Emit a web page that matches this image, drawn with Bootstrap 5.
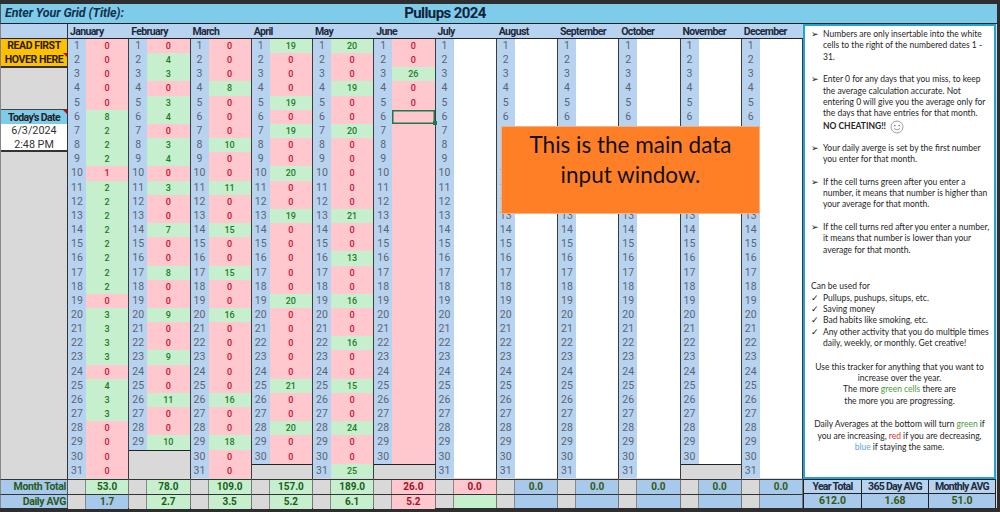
<!DOCTYPE html>
<html lang="en">
<head>
<meta charset="utf-8">
<title>Pullups 2024</title>
<link href="https://cdn.jsdelivr.net/npm/bootstrap@5.3.0/dist/css/bootstrap.min.css" rel="stylesheet">
<style>
html,body{margin:0;height:512px;overflow:hidden;background:#2e2e2e}
.sheet{width:997px;height:512px;margin-left:0;padding-top:4px;position:relative;font-family:Roboto,sans-serif;color:#222}
.titlebar{height:20px;background:#7fcbea;border-bottom:1px solid #222;border-left:1px solid #555}
.title-left{width:300px;padding-left:4px;font-size:12.5px;font-weight:700;font-style:italic;color:#14324a;white-space:nowrap;letter-spacing:-.15px}
.title-main{position:absolute;left:345px;width:200px;text-align:center;font-size:15px;font-weight:700;color:#10233a;line-height:19px;letter-spacing:-.6px}
.ledger{display:grid;grid-template-columns:68px repeat(12,61.25px) 194px;grid-template-rows:15px 440px 15px 14px;background:#d9d9d9}
.side-head{background:#b8d3f0;border-bottom:1px solid #222;border-right:1px solid #333;border-left:1px solid #888}
.mon-head{background:#b8d3f0;border-bottom:1px solid #222;font-size:10.5px;font-weight:700;color:#1d2a3a;padding-left:2px;line-height:15px;white-space:nowrap;letter-spacing:-.65px}
.side-body{background:#d9d9d9;border-right:1px solid #333;border-left:1px solid #888}
.read-box{height:29px;background:#ffc000;border-bottom:2px solid #333;font-size:10.5px;font-weight:700;line-height:14px;text-align:center;color:#2a2000;position:relative;white-space:nowrap;letter-spacing:-.42px}
.side-gap{height:41px}
.date-head{height:15px;background:#7fcbea;font-size:10.5px;font-weight:700;text-align:center;line-height:15px;position:relative;border-top:1px solid #444;white-space:nowrap;letter-spacing:-.6px}
.date-val{height:28px;background:#fff;border-bottom:2px solid #333;font-size:10.8px;text-align:center;line-height:14px;color:#333}
.flag{position:absolute;right:0;top:0;width:0;height:0;border-top:4px solid #e00000;border-left:4px solid transparent}
.read-box .flag{top:14px}
.mon-body{display:grid;grid-template-columns:18px 1fr;grid-template-rows:repeat(31,14.16px);border-right:1px solid #3c3c3c;min-width:0}
.dnum{background:#b8d3f0;color:#5c6470;font-size:10.5px;text-align:center;line-height:14.5px;overflow:hidden}
.dval{font-size:9px;text-align:center;line-height:14.5px;font-weight:500;position:relative}
.is-up{background:#c6efce;color:#1f7a1f}
.is-down{background:#ffc7ce;color:#c8102e}
.is-open{background:#fff}
.filler{grid-column:1/-1;background:#d9d9d9;border-top:1px solid #222}
.picked{box-shadow:inset 0 0 0 1.5px #1f7a4a}
.handle{position:absolute;right:-2px;bottom:-1px;width:4px;height:4px;background:#1f7a4a;z-index:2}
.foot-label{background:#a6c9ec;border-top:1px solid #333;border-right:1px solid #555;border-left:1px solid #888;font-size:10.5px;font-weight:700;color:#2a5a1a;text-align:right;padding-right:1px;line-height:14px;white-space:nowrap;letter-spacing:-.35px}
.foot-cell{display:grid;grid-template-columns:18px 1fr;border-top:1px solid #333;border-right:1px solid #777}
.foot-gap{background:#d9d9d9;border-right:1px solid #888}
.foot-val{font-size:10px;font-weight:700;text-align:center;line-height:14px}
.f-up{background:#c6efce;color:#1a5e1a}
.f-down{background:#ffc7ce;color:#a50e1e}
.f-flat{background:#a6c9ec;color:#35590f}
.note-panel{grid-row:1/3;grid-column:14;background:#fff;border:2px solid #1fa3d8;padding:3px 0 0 6px;font-family:Lato,"Open Sans",sans-serif;font-size:8.5px;line-height:11.4px;color:#262626;white-space:nowrap;overflow:hidden;width:193px}
.note-row{display:flex;margin-bottom:11px}
.note-mark{width:12px;flex:none;color:#111;font-family:"DejaVu Sans",sans-serif;font-size:9px}
.note-row.tight{margin-bottom:0}
.note-mid{text-align:center;margin:0 0 12px -4px;width:185px}
.tone-g{color:#4a9a3c}.tone-r{color:#e0302a}.tone-b{color:#5ba3e6}
.smile{vertical-align:-5px;margin-left:4px}
.stat-trio{grid-column:14;grid-row:3/5;display:grid;grid-template-columns:59px 67px 67px;grid-template-rows:15px 14px;width:193px}
.stat-h{background:#b8d3f0;border:1px solid #222;border-left-width:0;font-size:10.5px;font-weight:700;text-align:center;line-height:14px;color:#1d2a3a;white-space:nowrap;letter-spacing:-.7px}
.stat-v{background:#a6c9ec;border:1px solid #222;border-width:0 1px 0 0;font-size:10.5px;font-weight:700;text-align:center;line-height:14px;color:#35590f}
.stat-h:first-child,.stat-v.first{border-left:1px solid #222}
.banner{position:absolute;left:501px;top:126px;width:259px;height:88px;background:#ff7f27;border:1px solid #f4b183;font-family:Lato,"Open Sans",sans-serif;font-size:22.5px;line-height:30px;color:#111;text-align:center;padding-top:3px;white-space:nowrap;z-index:3}
</style>
</head>
<body>
<div class="sheet">
  <div class="titlebar d-flex align-items-center">
    <div class="title-left">Enter Your Grid (Title):</div>
    <div class="title-main">Pullups 2024</div>
  </div>
  <div class="ledger" id="ledger"></div>
  <div class="banner">This is the main data<br>input window.</div>
</div>
<script>
const names=["January","February","March","April","May","June","July","August","September","October","November","December"];
const lens=[31,29,31,30,31,30,31,31,31,31,30,31];
const z=n=>Array(n).fill(0);
const fromMap=(len,m)=>{const a=z(len);for(const k in m)a[k-1]=m[k];return a;};
const data=[
 [0,0,0,0,0,8,2,2,2,1,2,2,2,2,2,2,2,2,0,3,3,3,3,0,4,3,3,0,0,0,0],
 [0,4,3,0,3,4,0,3,4,0,3,0,0,7,0,0,8,0,0,9,0,0,9,0,0,11,0,0,10],
 fromMap(31,{4:8,8:10,11:11,14:15,17:15,20:16,26:16,29:18}),
 fromMap(30,{1:19,5:19,7:19,10:20,13:19,19:20,25:21,28:20}),
 fromMap(31,{1:20,4:19,7:20,13:21,16:13,19:16,22:16,25:15,28:24,31:25}),
 [0,0,26,0,0]
];
const downOverride={0:[10]};
const totals=[["53.0","f-up"],["78.0","f-up"],["109.0","f-up"],["157.0","f-up"],["189.0","f-up"],["26.0","f-down"],["0.0","f-down"],["0.0","f-flat"],["0.0","f-flat"],["0.0","f-flat"],["0.0","f-flat"],["0.0","f-flat"]];
const avgs=[["1.7","f-flat"],["2.7","f-up"],["3.5","f-up"],["5.2","f-up"],["6.1","f-up"],["5.2","f-down"],["","f-up"],["","f-flat"],["","f-flat"],["","f-flat"],["","f-flat"],["","f-flat"]];
const notes=`<div class="note-row"><span class="note-mark">&#10146;</span><span>Numbers are only insertable into the white<br>cells to the right of the numbered dates 1 -<br>31.</span></div>
<div class="note-row" style="margin-bottom:9px"><span class="note-mark">&#10146;</span><span>Enter 0 for any days that you miss, to keep<br>the average calculation accurate. Not<br>entering 0 will give you the average only for<br>the days that have entries for that month.<br><b>NO CHEATING!!</b><svg class="smile" width="14" height="14" viewBox="0 0 14 14" fill="none" stroke="#777" stroke-width=".7"><circle cx="7" cy="7" r="6"/><circle cx="4.8" cy="5.6" r=".5" fill="#777"/><circle cx="9.2" cy="5.6" r=".5" fill="#777"/><path d="M4 8.6q3 2.4 6 0"/></svg></span></div>
<div class="note-row"><span class="note-mark">&#10146;</span><span>Your daily averge is set by the first number<br>you enter for that month.</span></div>
<div class="note-row"><span class="note-mark">&#10146;</span><span>If the cell turns green after you enter a<br>number, it means that number is higher than<br>your average for that month.</span></div>
<div class="note-row" style="margin-bottom:25px"><span class="note-mark">&#10146;</span><span>If the cell turns red after you enter a number,<br>it means that number is lower than your<br>average for that month.</span></div>
<div>Can be used for</div>
<div class="note-row tight"><span class="note-mark">&#10003;</span><span>Pullups, pushups, situps, etc.</span></div>
<div class="note-row tight"><span class="note-mark">&#10003;</span><span>Saving money</span></div>
<div class="note-row tight"><span class="note-mark">&#10003;</span><span>Bad habits like smoking, etc.</span></div>
<div class="note-row" style="margin-bottom:12px"><span class="note-mark">&#10003;</span><span>Any other activity that you do multiple times<br>daily, weekly, or monthly. Get creative!</span></div>
<div class="note-mid">Use this tracker for anything that you want to<br>increase over the year.<br>The more <span class="tone-g">green cells</span> there are<br>the more you are progressing.</div>
<div class="note-mid">Daily Averages at the bottom will turn <span class="tone-g">green</span> if<br>you are increasing, <span class="tone-r">red</span> if you are decreasing,<br><span class="tone-b">blue</span> if staying the same.</div>`;
let h=`<div class="side-head"></div>`;
names.forEach(n=>h+=`<div class="mon-head">${n}</div>`);
h+=`<div class="note-panel">${notes}</div>`;
h+=`<div class="side-body"><div class="read-box">READ FIRST<br>HOVER HERE<span class="flag"></span></div><div class="side-gap"></div><div class="date-head">Today's Date<span class="flag"></span></div><div class="date-val">6/3/2024<br>2:48 PM</div></div>`;
names.forEach((n,m)=>{
  let b=`<div class="mon-body">`;
  for(let d=1;d<=lens[m];d++){
    let cls="is-open",txt="";
    if(m<5){const v=data[m][d-1];txt=v;cls=v>0?"is-up":"is-down";if(downOverride[m]&&downOverride[m].includes(d))cls="is-down";}
    else if(m==5){if(d<=5){const v=data[5][d-1];txt=v;cls=v>0?"is-up":"is-down";}else cls="is-down";}
    let extra="";
    if(m==5&&d==6){cls+=" picked";extra=`<span class="handle"></span>`;}
    b+=`<div class="dnum">${d}</div><div class="dval ${cls}">${txt}${extra}</div>`;
  }
  if(lens[m]<31)b+=`<div class="filler" style="grid-row:span ${31-lens[m]}"></div>`;
  h+=b+`</div>`;
});
const foot=(label,arr)=>{let s=`<div class="foot-label">${label}</div>`;arr.forEach(a=>s+=`<div class="foot-cell"><div class="foot-gap"></div><div class="foot-val ${a[1]}">${a[0]}</div></div>`);return s;};
h+=foot("Month Total",totals);
h+=`<div class="stat-trio"><div class="stat-h">Year Total</div><div class="stat-h">365 Day AVG</div><div class="stat-h">Monthly AVG</div><div class="stat-v first">612.0</div><div class="stat-v">1.68</div><div class="stat-v">51.0</div></div>`;
h+=foot("Daily AVG",avgs);
document.getElementById("ledger").innerHTML=h;
</script>
<script src="https://cdn.jsdelivr.net/npm/bootstrap@5.3.0/dist/js/bootstrap.bundle.min.js"></script>
</body>
</html>
